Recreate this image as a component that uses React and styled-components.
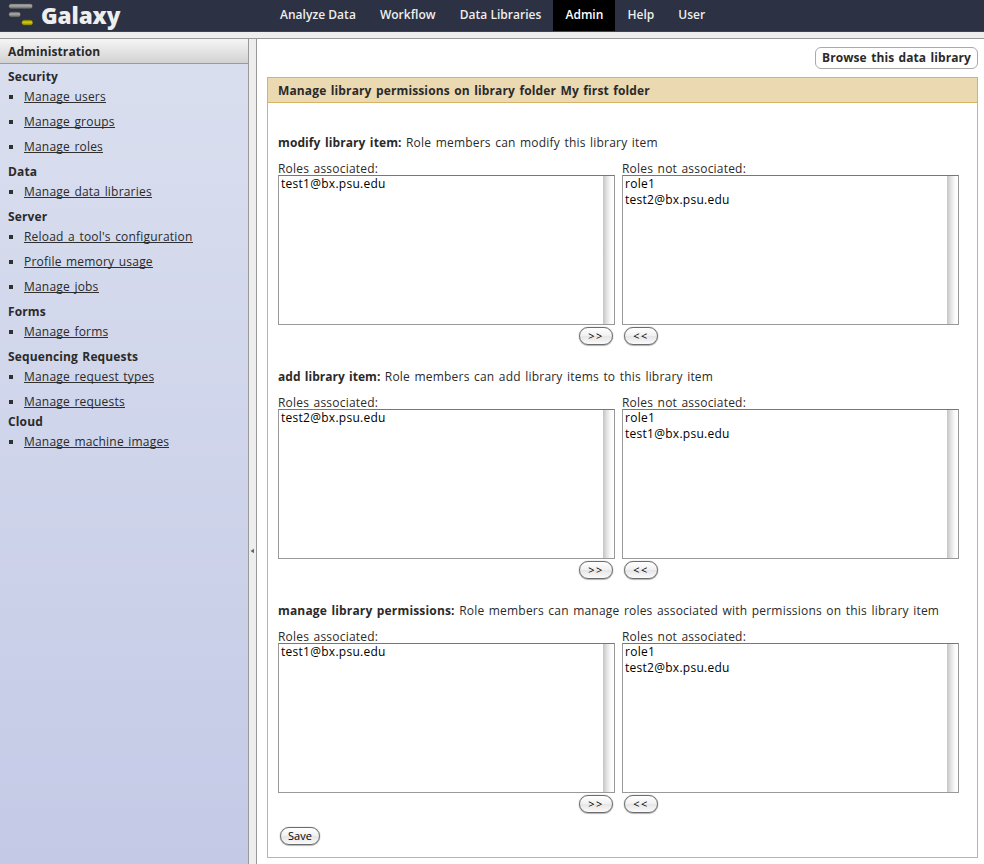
import React from "react";
import styled, { createGlobalStyle } from "styled-components";

const GlobalStyle = createGlobalStyle`
  *, *::before, *::after { box-sizing: border-box; }
  body {
    margin: 0;
    background: #eee;
    color: #2a2a2a;
    font: 12px/16px "Open Sans", "Noto Sans", sans-serif;
    letter-spacing: 0.2px;
    word-spacing: 1.15px;
    overflow: hidden;
  }
`;

const Page = styled.div`
  display: flex;
  flex-direction: column;
  width: 984px;
  height: 864px;
`;

const Masthead = styled.header`
  display: flex;
  height: 32px;
  flex: none;
  background: #2c3143;
  border-bottom: 1px solid #444;
`;

const Brand = styled.div`
  display: flex;
  width: 268px;
  padding-left: 8px;
  gap: 7px;
`;

const BrandName = styled.span`
  color: #eee;
  font-size: 22.5px;
  font-weight: 800;
  line-height: 31px;
  letter-spacing: -0.1px;
`;

const Nav = styled.nav`
  display: flex;
`;

const NavTab = styled.a`
  padding: 0 12px;
  line-height: 29px;
  font-weight: 600;
  letter-spacing: 0.03px;
  word-spacing: 0;
  color: ${(p) => (p.$active ? "#fff" : "#eee")};
  background: ${(p) => (p.$active ? "#000" : "transparent")};
`;

const Body = styled.div`
  display: flex;
  flex: 1;
  min-height: 0;
  padding-top: 6px;
`;

const Sidebar = styled.aside`
  width: 249px;
  flex: none;
  border-top: 1px solid #999;
  border-right: 1px solid #999;
  background: linear-gradient(#dadfef, #c4cae6);
`;

const SidebarHeader = styled.h1`
  height: 25px;
  margin: 0;
  padding: 0 8px;
  border-bottom: 1px solid #999;
  background: linear-gradient(#f5f5f5, #d2d2d2);
  font-size: 12px;
  line-height: 25px;
  letter-spacing: 0.1px;
`;

const SidebarBody = styled.div`
  padding: 3px 8px;
`;

const SectionTitle = styled.h2`
  margin: 0;
  font-size: 12px;
  line-height: 20px;
  letter-spacing: 0.13px;
`;

const LinkList = styled.ul`
  display: flex;
  flex-direction: column;
  gap: 5px;
  margin: 0;
  padding: 0 0 ${(p) => (p.$tight ? 0 : 5)}px;
  list-style: none;
`;

const LinkItem = styled.li`
  display: flex;
  align-items: flex-start;
  gap: 11px;
  height: 20px;
  padding-left: 1px;

  &::before {
    content: "";
    width: 4px;
    height: 4px;
    margin-top: 8px;
    background: #303030;
  }
`;

const Link = styled.a`
  height: 13px;
  margin-top: 3px;
  line-height: 14px;
  border-bottom: 1px solid #303030;
`;

const Splitter = styled.div`
  display: flex;
  align-items: center;
  justify-content: center;
  width: 7px;
  flex: none;
  border-top: 1px solid #999;
  padding-top: 199px;
`;

const Main = styled.main`
  flex: 1;
  min-width: 0;
  padding: 8px 6px 0 10px;
  border-top: 1px solid #999;
  border-left: 1px solid #999;
  background: #fff;
`;

const Actions = styled.div`
  display: flex;
  justify-content: flex-end;
  margin-bottom: 8px;
`;

const ActionButton = styled.a`
  height: 22px;
  width: 163px;
  text-align: center;
  border: 1px solid #aaa;
  border-radius: 6px;
  font-weight: 700;
  line-height: 19px;
  letter-spacing: 0.08px;
  white-space: nowrap;
`;

const Form = styled.form`
  height: 781px;
  border: 1px solid #d8b365;
`;

const FormTitle = styled.h2`
  height: 25px;
  margin: 0;
  padding: 0 10px;
  border-bottom: 1px solid #d8b365;
  background: #ebd9b2;
  font-size: 12px;
  line-height: 25px;
  letter-spacing: 0.13px;
`;

const FormBody = styled.div`
  padding: 31px 10px 0;
`;

const Permission = styled.section`
  height: 234px;
`;

const Description = styled.p`
  margin: 0 0 10px;
  line-height: 18px;
`;

const Action = styled.b`
  letter-spacing: ${(p) => p.$spacing}px;
`;

const Columns = styled.div`
  display: flex;
  gap: 7px;
`;

const Column = styled.div`
  display: flex;
  flex-direction: column;
  width: 337px;
  align-items: ${(p) => (p.$end ? "flex-end" : "flex-start")};
`;

const Label = styled.label`
  align-self: stretch;
  height: 13px;
  line-height: 14px;
`;

const ListBox = styled.div`
  display: flex;
  justify-content: space-between;
  align-self: stretch;
  height: 150px;
  border: 1px solid #999;
  border-top-color: #777;
  background: #fff;
  color: #000;
`;

const Options = styled.div`
  padding-left: 2px;
`;

const Option = styled.div`
  height: 16px;
  line-height: 16px;
  letter-spacing: 0.27px;
`;

const ScrollTrack = styled.div`
  width: 11px;
  background: linear-gradient(90deg, #c4c4c4, #e6e6e6 40%, #fafafa 70%, #fff);
`;

const PillButton = styled.button`
  display: flex;
  align-items: center;
  justify-content: center;
  width: ${(p) => p.$width}px;
  height: 18px;
  margin: ${(p) => p.$margin};
  padding: 0 0 1px;
  border: 1px solid #6c6c6c;
  border-radius: 9px;
  background: linear-gradient(#fff, #f1f1f1 48%, #e6e6e6 52%, #fafafa);
  box-shadow: 0 0 1px #777, 0 1px 1px #bbb;
  color: #000;
  font: 11px/14px "Open Sans", sans-serif;
  letter-spacing: ${(p) => p.$spacing || 0}px;
`;

const tabs = ["Analyze Data", "Workflow", "Data Libraries", "Admin", "Help", "User"];

const sections = [
  { title: "Security", links: ["Manage users", "Manage groups", "Manage roles"] },
  { title: "Data", links: ["Manage data libraries"] },
  { title: "Server", links: ["Reload a tool's configuration", "Profile memory usage", "Manage jobs"] },
  { title: "Forms", links: ["Manage forms"] },
  { title: "Sequencing Requests", links: ["Manage request types", "Manage requests"], tight: true },
  { title: "Cloud", links: ["Manage machine images"] },
];

const permissions = [
  {
    action: "modify library item:",
    text: "Role members can modify this library item",
    spacing: 0.1,
    associated: ["test1@bx.psu.edu"],
    others: ["role1", "test2@bx.psu.edu"],
  },
  {
    action: "add library item:",
    text: "Role members can add library items to this library item",
    spacing: 0.02,
    associated: ["test2@bx.psu.edu"],
    others: ["role1", "test1@bx.psu.edu"],
  },
  {
    action: "manage library permissions:",
    text: "Role members can manage roles associated with permissions on this library item",
    spacing: 0.16,
    associated: ["test1@bx.psu.edu"],
    others: ["role1", "test2@bx.psu.edu"],
  },
];

function Logo() {
  return (
    <svg width="26" height="28" viewBox="0 0 26 28">
      <defs>
        <linearGradient id="grey" x1="0" y1="0" x2="0" y2="1">
          <stop offset="0" stopColor="#777" />
          <stop offset="0.4" stopColor="#aaa" />
          <stop offset="1" stopColor="#555" />
        </linearGradient>
        <linearGradient id="gold" x1="0" y1="0" x2="0" y2="1">
          <stop offset="0" stopColor="#8e8b00" />
          <stop offset="0.45" stopColor="#d0cb10" />
          <stop offset="1" stopColor="#777300" />
        </linearGradient>
      </defs>
      <rect x="0.7" y="3.5" width="24" height="5.6" rx="2.4" fill="url(#grey)" stroke="#252936" strokeWidth="0.6" />
      <rect x="0.7" y="11.8" width="12" height="5.6" rx="2.4" fill="url(#grey)" stroke="#252936" strokeWidth="0.6" />
      <rect x="13.7" y="19.8" width="11.2" height="5.8" rx="2.4" fill="url(#gold)" stroke="#252936" strokeWidth="0.6" />
    </svg>
  );
}

function RoleList({ roles }) {
  return (
    <ListBox>
      <Options>
        {roles.map((role) => (
          <Option key={role}>{role}</Option>
        ))}
      </Options>
      <ScrollTrack />
    </ListBox>
  );
}

export default function App() {
  return (
    <Page>
      <GlobalStyle />
      <Masthead>
        <Brand>
          <Logo />
          <BrandName>Galaxy</BrandName>
        </Brand>
        <Nav>
          {tabs.map((tab) => (
            <NavTab key={tab} $active={tab === "Admin"}>{tab}</NavTab>
          ))}
        </Nav>
      </Masthead>
      <Body>
        <Sidebar>
          <SidebarHeader>Administration</SidebarHeader>
          <SidebarBody>
            {sections.map((section) => (
              <React.Fragment key={section.title}>
                <SectionTitle>{section.title}</SectionTitle>
                <LinkList $tight={section.tight}>
                  {section.links.map((link) => (
                    <LinkItem key={link}><Link>{link}</Link></LinkItem>
                  ))}
                </LinkList>
              </React.Fragment>
            ))}
          </SidebarBody>
        </Sidebar>
        <Splitter>
          <svg width="5" height="6" viewBox="0 0 5 6">
            <path d="M0.5 3 L4 0.7 V5.3 Z" fill="#666" />
          </svg>
        </Splitter>
        <Main>
          <Actions>
            <ActionButton>Browse this data library</ActionButton>
          </Actions>
          <Form>
            <FormTitle>Manage library permissions on library folder My first folder</FormTitle>
            <FormBody>
              {permissions.map((p) => (
                <Permission key={p.action}>
                  <Description><Action $spacing={p.spacing}>{p.action}</Action> {p.text}</Description>
                  <Columns>
                    <Column $end>
                      <Label>Roles associated:</Label>
                      <RoleList roles={p.associated} />
                      <PillButton type="button" $width={34} $margin="2px 2px 0 0" $spacing={1.5}>&gt;&gt;</PillButton>
                    </Column>
                    <Column>
                      <Label>Roles not associated:</Label>
                      <RoleList roles={p.others} />
                      <PillButton type="button" $width={34} $margin="2px 0 0 2px" $spacing={1.5}>&lt;&lt;</PillButton>
                    </Column>
                  </Columns>
                </Permission>
              ))}
              <PillButton type="button" $width={40} $margin="-9px 0 0 2px">Save</PillButton>
            </FormBody>
          </Form>
        </Main>
      </Body>
    </Page>
  );
}
